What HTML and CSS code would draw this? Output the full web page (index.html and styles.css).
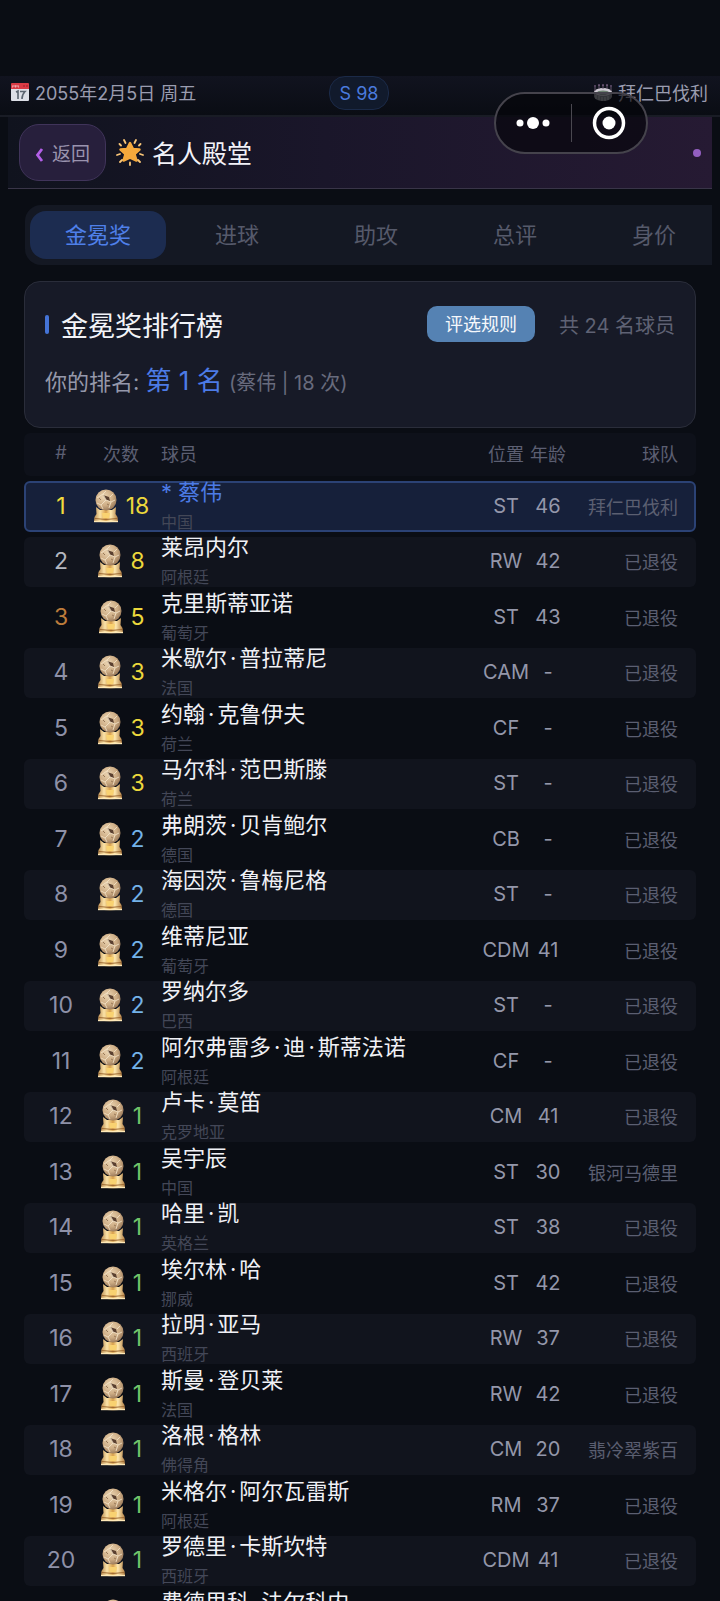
FILE: index.html
```html
<!DOCTYPE html>
<html lang="zh-CN">
<head>
<meta charset="utf-8">
<meta name="viewport" content="width=device-width, initial-scale=1">
<title>名人殿堂</title>
<link rel="stylesheet" href="styles.css">
</head>
<body>
<svg class="defs" aria-hidden="true">
  <defs>
    <linearGradient id="gold" x1="0" y1="0" x2="1" y2="0">
      <stop offset="0" stop-color="#b98a50"/><stop offset=".25" stop-color="#fbe3a8"/><stop offset=".5" stop-color="#d9a04a"/><stop offset=".7" stop-color="#ffe9b0"/><stop offset="1" stop-color="#b07c42"/>
    </linearGradient>
    <radialGradient id="ball" cx=".4" cy=".35" r=".7">
      <stop offset="0" stop-color="#ecd6b4"/><stop offset=".6" stop-color="#cdac84"/><stop offset="1" stop-color="#937355"/>
    </radialGradient>
    <symbol id="trophy" viewBox="0 0 26 34">
      <path d="M3 18 7 21h12l4-3-.5 7 2 3 .5 4.500q-12 1.500-24 0L1.500 28l2-3z" fill="url(#gold)"/>
      <path d="M9 24h8l-1 5H10z" fill="#f9d271"/>
      <path d="M2 29.500q11 2 22 0" stroke="#a06c34" fill="none"/>
      <path d="M1 32.500h24" stroke="#ffe9b8" stroke-width="1.400"/>
      <circle cx="13" cy="11" r="10.500" fill="url(#ball)"/>
      <path d="M10 6 16 8 17 12 13 11z" fill="#5a4030"/>
      <path d="M4 9 10 5 13 2M10 5 13 11 8 16 4 14M13 11 18 13 16 19M18 13l4-2M17 8l3-3M8 16l2 4" stroke="#f5e6cc" stroke-width=".8" fill="none"/>
      <path d="M6 9l2 2M14 15l2 1" stroke="#98795a"/>
    </symbol>
  </defs>
</svg>
<div class="app">
  <header class="status">
    <div class="status-item">
      <svg class="icon-s" viewBox="0 0 20 20" aria-hidden="true"><path d="M1 4h18v14q0 1-1 1H2q-1 0-1-1z" fill="#dcdfe6"/><path d="M1 2q0-1 1-1h16q1 0 1 1v5H1z" fill="#d93b45"/><path d="M3 3v2H2m3-2v2h1V3m2 0v2h1" stroke="#f6c9cc" stroke-width=".8" fill="none"/><circle cx="14" cy="4" r="1" fill="#b02833"/><circle cx="17" cy="4" r="1" fill="#b02833"/><path d="M6 10l2-1v8M10 9.500h5q-3 3-3 7.500" fill="none" stroke="#5b6570" stroke-width="1.600"/></svg>
      <span>2055年2月5日 周五</span>
    </div>
    <div class="season">S 98</div>
    <div class="status-item end">
      <svg class="icon-s" viewBox="0 0 20 20" aria-hidden="true"><path d="M1 10v5q2 4 9 4t9-4v-5z" fill="#85888e"/><ellipse cx="10" cy="10" rx="9" ry="4" fill="#cfcbd4"/><ellipse cx="10" cy="10.500" rx="6" ry="2" fill="#6b7f70"/><path d="M3 13v4M6 14v4M9 15v4M12 15v4M15 14v4" stroke="#c0c2c6"/><path d="M2 9V5M6 7V3M10 7V3M14 7V3M18 9V5" stroke="#67586f"/><path d="M1 4h2M5 3h2M9 3h2M13 3h2M17 4h2" stroke="#8d6f96"/></svg>
      <span>拜仁巴伐利</span>
    </div>
  </header>
  <div class="capsule">
    <button class="capsule-btn" aria-label="更多"><svg width="34" height="14" viewBox="0 0 34 14"><g fill="#fff"><circle cx="4" cy="7" r="3.500"/><circle cx="17" cy="7" r="6"/><circle cx="30" cy="7" r="3.500"/></g></svg></button>
    <button class="capsule-btn" aria-label="关闭"><svg width="34" height="34" viewBox="0 0 34 34"><circle cx="17" cy="17" r="14.500" fill="none" stroke="#fff" stroke-width="3.500"/><circle cx="17" cy="17" r="6.500" fill="#fff"/></svg></button>
  </div>
  <main class="page">
    <div class="titlebar">
      <button class="back"><svg class="chevron" width="9" height="14" viewBox="0 0 9 14" aria-hidden="true"><path d="M7 1 2.500 7 7 13" fill="none" stroke="#b35fe8" stroke-width="2.800"/></svg>返回</button>
      <h1 class="title"><svg class="icon-m" viewBox="0 0 28 28" aria-hidden="true"><path d="M14 5l3 6 6.500.5-5 4.500 2 6.500-6.500-3-6.500 3 2-6.500-5-4.500L11 11z" fill="#f5a93c" stroke="#f5a93c" stroke-width="2.500" stroke-linejoin="round"/><path d="M8 2l1.500 3M20 2l-1.500 3M1 17l3-1M27 17l-3-1M14 24.500V27M3.500 6l1.500 1.500M24.500 6 23 7.500M4 24l2-2M24 24l-2-2" stroke="#f9c678" stroke-width="1.800" stroke-linecap="round"/></svg>名人殿堂</h1>
      <span class="dot"></span>
    </div>
    <nav class="tabs">
      <button class="tab active">金冕奖</button><button class="tab">进球</button><button class="tab">助攻</button><button class="tab">总评</button><button class="tab">身价</button>
    </nav>
    <section class="card">
      <div class="card-head">
        <h2 class="card-title">金冕奖排行榜</h2>
        <button class="rules">评选规则</button>
        <span class="total">共 24 名球员</span>
      </div>
      <p class="mine">你的排名: <strong class="mine-rank">第 1 名</strong> <span class="mine-note">(蔡伟 | 18 次)</span></p>
    </section>
    <table class="board">
      <thead><tr class="row head"><th>#</th><th>次数</th><th class="left">球员</th><th>位置</th><th>年龄</th><th class="right">球队</th></tr></thead>
      <tbody id="rows"></tbody>
    </table>
  </main>
</div>
<script src="app.js"></script>
</body>
</html>
```
FILE: styles.css
```css
* { box-sizing: border-box; }
body {
  margin: 0;
  background: #0a0d14;
  color: #e8eaf2;
  font-family: Inter, "Noto Sans CJK SC", sans-serif;
  font-size: 18px;
}
button { font: inherit; border: 0; background: none; padding: 0; color: inherit; }
h1, h2, p { margin: 0; font-weight: 400; }
.defs { position: absolute; width: 0; height: 0; }
.app { position: relative; height: 100vh; overflow: hidden; padding-top: 76px; }

.status {
  display: grid;
  grid-template-columns: 1fr auto 1fr;
  align-items: start;
  height: 41px;
  padding: 0 12px 0 10px;
  background: linear-gradient(#11131f, #0a0d14);
  border-bottom: 2px solid #191c25;
  color: #9a9caf;
}
.status-item { display: flex; align-items: center; gap: 5px; height: 32px; }
.end { justify-content: flex-end; }
.icon-s { width: 20px; height: 20px; }
.season {
  height: 34px;
  padding: 0 10px;
  border: 1px solid #1b2a48;
  border-radius: 16px;
  background: #111a2c;
  color: #4a7ade;
  line-height: 34px;
}
.capsule {
  position: absolute;
  top: 92px;
  right: 72px;
  display: flex;
  align-items: center;
  width: 154px;
  height: 62px;
  border: 2px solid #45434c;
  border-radius: 31px;
  background: rgba(5, 5, 9, .65);
}
.capsule-btn { flex: 1; display: flex; align-items: center; justify-content: center; height: 38px; }
.capsule-btn + .capsule-btn { border-left: 1px solid #4a4850; }

.page { padding: 0 8px; }
.titlebar {
  display: flex;
  align-items: center;
  gap: 10px;
  height: 72px;
  padding: 0 11px;
  background: linear-gradient(90deg, #10131e, #1a162a 45%, #261a33);
  border-bottom: 1px solid #393548;
}
.back {
  display: flex;
  align-items: center;
  gap: 8px;
  height: 57px;
  padding: 0 15px;
  border: 1px solid #40345a;
  border-radius: 20px;
  background: #271f3c;
  color: #9a93ae;
  font-size: 19px;
}
.chevron { margin-top: 4px; }
.title { display: flex; align-items: center; gap: 8px; flex: 1; padding-bottom: 2px; font-size: 25px; color: #f2f2f8; }
.icon-m { width: 28px; height: 28px; }
.dot { width: 8px; height: 8px; border-radius: 50%; background: #935fc0; }

.tabs {
  display: flex;
  gap: 3px;
  height: 60px;
  margin: 16px 0 16px 17px;
  padding: 6px 0 6px 5px;
  border-radius: 16px 0 0 16px;
  background: #141823;
  overflow: hidden;
}
.tab { flex: 1; min-width: 136px; padding-bottom: 4px; border-radius: 16px; color: #565a6b; font-size: 22px; }
.active { background: #1c2c50; color: #4f80ea; }

.card {
  margin: 0 16px;
  height: 147px;
  padding: 23px 20px;
  border: 1px solid #2a2d3a;
  border-radius: 16px;
  background: #171a27;
}
.card-head { display: flex; align-items: center; height: 38px; }
.card-title { display: flex; align-items: center; gap: 12px; flex: 1; font-size: 27px; color: #f2f3f8; }
.card-title::before { content: ""; width: 4px; height: 19px; border-radius: 2px; background: #4473d6; }
.rules { width: 108px; height: 36px; padding-bottom: 2px; border-radius: 10px; background: #5582b3; color: #f5f8fc; }
.total { margin-left: 24px; color: #5f6274; font-size: 20px; }
.mine { margin-top: 19px; line-height: 38px; color: #9598aa; font-size: 22px; }
.mine-rank { color: #4c7be6; font-size: 26px; font-weight: 400; }
.mine-note { color: #686b7d; font-size: 20px; }

.board { display: block; margin: 5px 16px 0; }
.board thead { display: block; margin-bottom: 5px; }
.board tbody { display: flex; flex-direction: column; gap: 5px; }
.row {
  display: grid;
  grid-template-columns: 40px 80px 1fr 48px 36px 112px;
  grid-template-rows: minmax(0, 1fr);
  align-items: center;
  height: 50px;
  padding: 0 17px 2px 16px;
  border: 1px solid transparent;
  border-radius: 6px;
}
.row:nth-child(odd) { height: 51px; }
.row:nth-child(even) { background: #11141d; }
.board .head { height: 43px; padding-bottom: 4px; background: #0e111a; color: #5c5f72; }
.me { background: #16203a; border: 2px solid #2b4275; padding: 0 16px 2px 15px; }
.row th, .row td { padding: 0; font-weight: 400; text-align: center; white-space: nowrap; }
.row .left { text-align: left; }
.row .right { text-align: right; }
.rank { color: #8e91a8; font-size: 23px; }
.row:nth-child(2) .rank { color: #b4b7c0; }
.row:nth-child(3) .rank { color: #bd7b3b; }
.row.me .rank { color: #f2dc3c; }
.count { display: flex; align-items: center; justify-content: center; gap: 7px; font-size: 23px; }
.trophy { width: 26px; height: 34px; }
.high { color: #ecd83c; }
.mid { color: #74b2e8; }
.low { color: #70c46a; }
.row .player { display: flex; flex-direction: column; justify-content: center; text-align: left; }
.name { color: #f0f1f6; font-size: 22px; line-height: 33px; }
.sep { padding: 0 3px; }
.country { color: #434757; font-size: 16px; line-height: 27px; }
.me .name { color: #4c7be6; }
.pos, .age { color: #9497aa; font-size: 20px; }
.team { color: #5b5f71; }
```
FILE: app.js
```js
const players = [
  [18, "* 蔡伟", "中国", "ST", "46", "拜仁巴伐利"],
  [8, "莱昂内尔", "阿根廷", "RW", "42", "已退役"],
  [5, "克里斯蒂亚诺", "葡萄牙", "ST", "43", "已退役"],
  [3, "米歇尔·普拉蒂尼", "法国", "CAM", "-", "已退役"],
  [3, "约翰·克鲁伊夫", "荷兰", "CF", "-", "已退役"],
  [3, "马尔科·范巴斯滕", "荷兰", "ST", "-", "已退役"],
  [2, "弗朗茨·贝肯鲍尔", "德国", "CB", "-", "已退役"],
  [2, "海因茨·鲁梅尼格", "德国", "ST", "-", "已退役"],
  [2, "维蒂尼亚", "葡萄牙", "CDM", "41", "已退役"],
  [2, "罗纳尔多", "巴西", "ST", "-", "已退役"],
  [2, "阿尔弗雷多·迪·斯蒂法诺", "阿根廷", "CF", "-", "已退役"],
  [1, "卢卡·莫笛", "克罗地亚", "CM", "41", "已退役"],
  [1, "吴宇辰", "中国", "ST", "30", "银河马德里"],
  [1, "哈里·凯", "英格兰", "ST", "38", "已退役"],
  [1, "埃尔林·哈", "挪威", "ST", "42", "已退役"],
  [1, "拉明·亚马", "西班牙", "RW", "37", "已退役"],
  [1, "斯曼·登贝莱", "法国", "RW", "42", "已退役"],
  [1, "洛根·格林", "佛得角", "CM", "20", "翡冷翠紫百"],
  [1, "米格尔·阿尔瓦雷斯", "阿根廷", "RM", "37", "已退役"],
  [1, "罗德里·卡斯坎特", "西班牙", "CDM", "41", "已退役"],
  [1, "费德里科·法尔科内", "", "", "", ""]
];
document.getElementById("rows").innerHTML = players.map(([n, name, country, pos, age, team], i) => `
  <tr class="row${i === 0 ? " me" : ""}">
    <td class="rank">${i + 1}</td>
    <td class="count ${n > 2 ? "high" : n > 1 ? "mid" : "low"}"><svg class="trophy" aria-hidden="true"><use href="#trophy"/></svg>${n}</td>
    <td class="player"><span class="name">${name.replace(/·/g, '<span class="sep">·</span>')}</span><span class="country">${country || "&nbsp;"}</span></td>
    <td class="pos">${pos}</td>
    <td class="age">${age}</td>
    <td class="team right">${team}</td>
  </tr>`).join("");
```
